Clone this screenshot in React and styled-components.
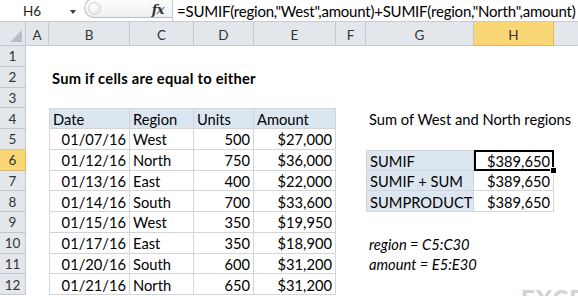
import React from "react";
import styled, { createGlobalStyle, css } from "styled-components";

const GlobalStyle = createGlobalStyle`
  html, body { margin: 0; padding: 0; background: #fff; overflow: hidden; }
  body { font-family: Lato, "Liberation Sans", sans-serif; }
  #root { width: 578px; height: 296px; }
`;

const COLS = "26px 23px 81px 64px 60px 82px 30px 108px 80px 24px";
const LETTERS = ["A", "B", "C", "D", "E", "F", "G", "H", "I"];
const ACTIVE_COL = "H";
const ACTIVE_ROW = 6;

const HEAD_BG = "#e3e6ea";
const HEAD_LINE = "#c3c8ce";
const HI_BG = "#f9d776";
const HI_LINE = "#eeb446";
const TABLE_LINE = "#d2d6db";
const BLUE = "#dce6f1";

const Page = styled.div`
  position: relative;
  width: 578px;
  height: 296px;
  overflow: hidden;
  display: flex;
  flex-direction: column;
  color: #000;
`;

/* ---------- formula bar ---------- */
const FormulaBar = styled.div`
  height: 22px;
  box-sizing: border-box;
  border-bottom: 1px solid #c7cbd0;
  display: flex;
  align-items: flex-start;
  background: #fff;
`;

const NameBox = styled.div`
  position: relative;
  width: 84px;
  height: 21px;
  box-sizing: border-box;
  padding-left: 23px;
  display: flex;
  align-items: center;
  font-size: 13.5px;
  color: #1e1e1e;
`;

const DropArrow = styled.span`
  position: absolute;
  left: 70px;
  top: 10px;
  width: 0;
  height: 0;
  border-left: 3.5px solid transparent;
  border-right: 3.5px solid transparent;
  border-top: 4px solid #3a3a3a;
`;

const Pill = styled.div`
  position: relative;
  width: 88px;
  height: 20px;
  margin-top: -2px;
  box-sizing: border-box;
  border: 1px solid #b8bdc3;
  border-right: none;
  border-radius: 11px 0 0 11px;
  background: linear-gradient(#fdfdfd, #eef0f2);
  display: flex;
  align-items: center;
  justify-content: flex-end;
  padding-right: 8px;
`;

const Knob = styled.span`
  position: absolute;
  left: 3px;
  top: 3px;
  width: 13px;
  height: 13px;
  border-radius: 50%;
  border: 1px solid #cfd3d8;
  background: radial-gradient(circle at 40% 35%, #ffffff, #dfe2e6);
  box-sizing: border-box;
`;

const Fx = styled.span`
  font-family: "DejaVu Serif", "Liberation Serif", serif;
  font-style: italic;
  font-weight: bold;
  font-size: 13px;
  color: #333;
  letter-spacing: -0.5px;
  margin-top: 2px;
`;

const FormulaText = styled.div`
  flex: 1;
  height: 21px;
  box-sizing: border-box;
  border-left: 1px solid #c7cbd0;
  padding-left: 4px;
  display: flex;
  align-items: center;
  font-size: 15px;
  white-space: nowrap;
  letter-spacing: -0.22px;
`;

/* ---------- sheet ---------- */
const HeaderRow = styled.div`
  display: grid;
  grid-template-columns: ${COLS};
  height: 24px;
  background: ${HEAD_BG};
`;

const Corner = styled.div`
  position: relative;
  box-sizing: border-box;
  border-right: 1px solid ${HEAD_LINE};
  border-bottom: 1px solid ${HEAD_LINE};
  &::after {
    content: "";
    position: absolute;
    right: 3px;
    bottom: 3px;
    width: 0;
    height: 0;
    border-left: 12px solid transparent;
    border-bottom: 12px solid #b9bec4;
  }
`;

const ColHead = styled.div`
  box-sizing: border-box;
  display: flex;
  align-items: center;
  justify-content: center;
  padding-top: 2px;
  font-size: 13.5px;
  color: #333;
  border-right: 1px solid
    ${(p) => (p.$active ? HI_LINE : p.$last ? "transparent" : HEAD_LINE)};
  border-bottom: 1px solid ${(p) => (p.$active ? HI_LINE : HEAD_LINE)};
  background: ${(p) => (p.$active ? HI_BG : HEAD_BG)};
`;

const Body = styled.div`
  display: grid;
  grid-template-columns: ${COLS};
  grid-auto-rows: 20.75px;
`;

const RowHead = styled.div`
  box-sizing: border-box;
  display: flex;
  align-items: center;
  justify-content: center;
  padding-top: 1px;
  font-size: 13.5px;
  color: #333;
  background: ${(p) => (p.$active ? HI_BG : HEAD_BG)};
  border-right: 1px solid ${(p) => (p.$active ? HI_LINE : HEAD_LINE)};
  border-bottom: 1px solid ${(p) => (p.$active ? HI_LINE : HEAD_LINE)};
`;

const Cell = styled.div`
  position: relative;
  box-sizing: border-box;
  display: flex;
  align-items: center;
  justify-content: ${(p) => (p.$align === "right" ? "flex-end" : "flex-start")};
  padding: 1px 3px 0 3px;
  font-size: 14.7px;
  white-space: nowrap;
  overflow: visible;
  z-index: ${(p) => (p.$selected ? 3 : p.$spill ? 2 : 1)};
  font-weight: ${(p) => (p.$bold ? 700 : 400)};
  font-style: ${(p) => (p.$italic ? "italic" : "normal")};
  letter-spacing: ${(p) => (p.$bold ? "0.25px" : "0")};
  background: ${(p) => p.$bg || "transparent"};
  ${(p) =>
    p.$grid &&
    css`
      border-right: 1px solid ${TABLE_LINE};
      border-bottom: 1px solid ${TABLE_LINE};
    `}
  ${(p) => p.$top && css`border-top: 1px solid ${TABLE_LINE};`}
  ${(p) => p.$left && css`border-left: 1px solid ${TABLE_LINE};`}
  ${(p) =>
    p.$selected &&
    css`
      &::after {
        content: "";
        position: absolute;
        left: 0;
        top: -1px;
        right: -1px;
        bottom: -1px;
        border: 2px solid #000;
      }
      &::before {
        content: "";
        position: absolute;
        right: -4px;
        bottom: -4px;
        width: 5px;
        height: 5px;
        background: #000;
        border: 1px solid #fff;
        z-index: 4;
      }
    `}
`;

const Watermark = styled.div`
  position: absolute;
  left: 521px;
  top: 287px;
  font-size: 24px;
  line-height: 24px;
  font-weight: 900;
  color: #d3d3d3;
  letter-spacing: 1px;
  z-index: 5;
`;

/* ---------- data ---------- */
const sales = [
  ["01/07/16", "West", "500", "$27,000"],
  ["01/12/16", "North", "750", "$36,000"],
  ["01/13/16", "East", "400", "$22,000"],
  ["01/14/16", "South", "700", "$33,600"],
  ["01/15/16", "West", "350", "$19,950"],
  ["01/17/16", "East", "350", "$18,900"],
  ["01/20/16", "South", "600", "$31,200"],
  ["01/21/16", "North", "650", "$31,200"],
];

function buildCells() {
  const cells = {};
  const set = (col, row, def) => {
    cells[`${col}${row}`] = def;
  };
  set("B", 2, { text: "Sum if cells are equal to either", bold: true, spill: true });

  const heads = ["Date", "Region", "Units", "Amount"];
  ["B", "C", "D", "E"].forEach((c, i) =>
    set(c, 4, { text: heads[i], bg: BLUE, grid: true, top: true, left: i === 0 })
  );
  sales.forEach((r, ri) => {
    const row = 5 + ri;
    set("B", row, { text: r[0], align: "right", grid: true, left: true });
    set("C", row, { text: r[1], grid: true });
    set("D", row, { text: r[2], align: "right", grid: true });
    set("E", row, { text: r[3], align: "right", grid: true });
  });

  set("G", 4, { text: "Sum of West and North regions", spill: true });

  const sums = ["SUMIF", "SUMIF + SUM", "SUMPRODUCT"];
  sums.forEach((s, i) => {
    const row = 6 + i;
    set("G", row, { text: s, bg: BLUE, grid: true, left: true, top: i === 0 });
    set("H", row, {
      text: "$389,650",
      align: "right",
      grid: true,
      top: i === 0,
      selected: row === ACTIVE_ROW,
    });
  });

  set("G", 10, { text: "region = C5:C30", italic: true, spill: true });
  set("G", 11, { text: "amount = E5:E30", italic: true, spill: true });
  return cells;
}

const CELLS = buildCells();

export default function App() {
  const rows = Array.from({ length: 12 }, (_, i) => i + 1);
  return (
    <Page>
      <GlobalStyle />
      <FormulaBar>
        <NameBox>
          H6
          <DropArrow />
        </NameBox>
        <Pill>
          <Knob />
          <Fx>fx</Fx>
        </Pill>
        <FormulaText>
          =SUMIF(region,"West",amount)+SUMIF(region,"North",amount)
        </FormulaText>
      </FormulaBar>

      <HeaderRow>
        <Corner />
        {LETTERS.map((l, i) => (
          <ColHead
            key={l}
            $active={l === ACTIVE_COL}
            $last={i === LETTERS.length - 1}
          >
            {i === LETTERS.length - 1 ? "" : l}
          </ColHead>
        ))}
      </HeaderRow>

      <Body>
        {rows.map((r) => (
          <React.Fragment key={r}>
            <RowHead $active={r === ACTIVE_ROW}>{r}</RowHead>
            {LETTERS.map((l) => {
              const d = CELLS[`${l}${r}`];
              if (!d) return <Cell key={l} />;
              return (
                <Cell
                  key={l}
                  $align={d.align}
                  $bold={d.bold}
                  $italic={d.italic}
                  $bg={d.bg}
                  $grid={d.grid}
                  $top={d.top}
                  $left={d.left}
                  $spill={d.spill}
                  $selected={d.selected}
                >
                  {d.text}
                </Cell>
              );
            })}
          </React.Fragment>
        ))}
      </Body>

      <Watermark>EXCELJET</Watermark>
    </Page>
  );
}
